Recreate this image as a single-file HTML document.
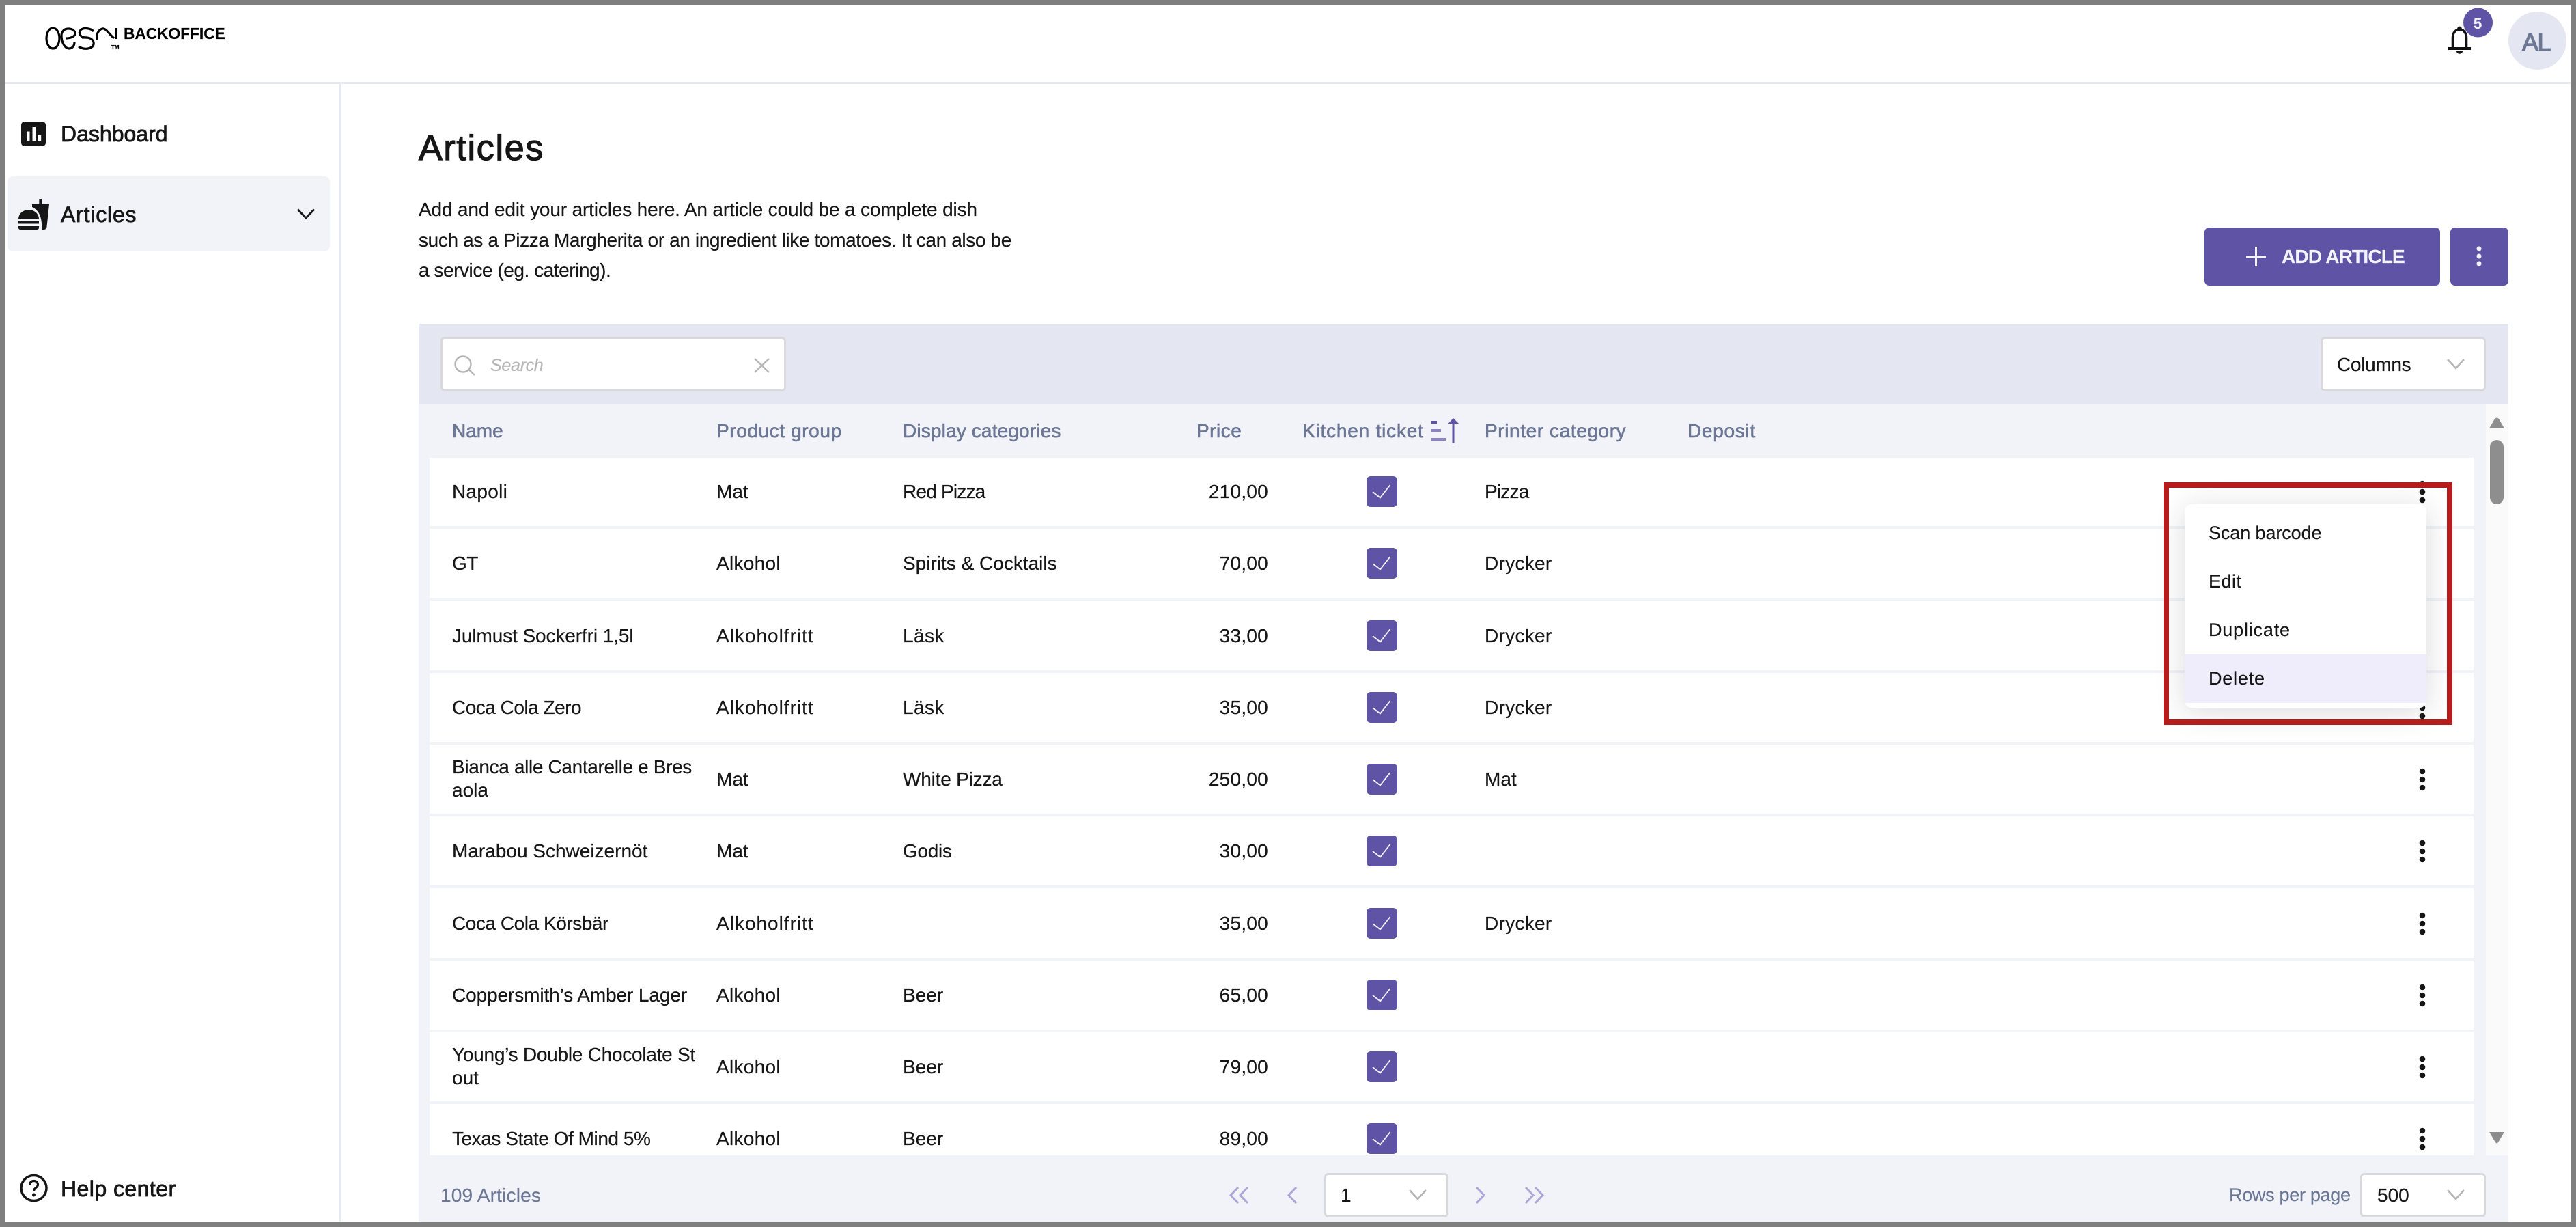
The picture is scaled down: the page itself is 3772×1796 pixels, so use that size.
<!DOCTYPE html>
<html><head><meta charset="utf-8"><title>Articles</title>
<style>
html,body{margin:0;padding:0;width:3772px;height:1796px;overflow:hidden;background:#fff}
body{position:relative;font-family:"Liberation Sans",sans-serif;color:#161616}
.a{position:absolute}
.t{position:absolute;white-space:nowrap;line-height:1;font-size:28px;-webkit-text-stroke:.2px currentColor}
.m{-webkit-text-stroke:.75px currentColor}
.h{color:#6c7795;top:617px;-webkit-text-stroke:.6px #6c7795}
.r{position:absolute;left:0;width:3772px;height:100px}
.n{left:662px;top:36px}.p{left:1049px;top:36px}.d{left:1322px;top:36px}
.pr{right:1915px;top:36px;letter-spacing:.25px}.c{left:2174px;top:36px}
.l1{left:662px;top:18px}.l2{left:662px;top:52px}
.af{letter-spacing:1px}
.ck{position:absolute;left:2001px;top:27px;width:45px;height:45px}
.kb{position:absolute;left:3538px;top:27px;width:18px;height:46px}
.menu{position:absolute;left:3199px;top:738px;width:354px;height:298px;background:#fff;border-radius:10px;box-shadow:0 6px 44px rgba(30,30,50,.16)}
.menu .t{font-size:27px;left:35px}
</style></head><body>

<!-- top bar -->
<div class="a" style="left:0;top:120px;width:3772px;height:3px;background:#e6e8f2"></div>
<div class="a" style="left:497px;top:122px;width:3px;height:1674px;background:#e6e8f2"></div>

<!-- logo -->
<svg class="a" style="left:0;top:0" width="360" height="120" fill="none" stroke="#000" stroke-width="3.2">
<ellipse cx="77.500" cy="56" rx="9.500" ry="15"/>
<path d="M90 52C90 46 94 42 100 42C106 42 110 45 110 49C110 53 104 56 97 56"/>
<path d="M90 52C90 62 95 71 101 71C106 71 109 67 109 62"/>
<path d="M137 46C133 41 122 40 118 44C114 49 118 55 126 55C134 55 138 60 137 65C136 71 124 74 115 68"/>
<path d="M120 55H128"/>
<path d="M142 58C140 48 147 41 152 42C156 43 160 50 167 56"/>
<path d="M170 41V57" stroke-width="3.800"/>
</svg>
<div class="t" style="left:181px;top:38px;font-size:22.7px;font-weight:700;color:#000">BACKOFFICE</div>
<div class="t" style="left:163px;top:66px;font-size:8px;font-weight:700;color:#000">TM</div>

<!-- bell/avatar -->
<svg class="a" style="left:3580px;top:8px" width="80" height="80" viewBox="3580 8 80 80">
<path d="M3591.500 70V55C3591.500 48 3596 43 3601.500 43C3607 43 3611.500 48 3611.500 55V70" fill="none" stroke="#111" stroke-width="3.600"/>
<circle cx="3601.500" cy="42" r="3.400" fill="#111"/>
<rect x="3585" y="69" width="33" height="4" fill="#111"/>
<path d="M3597 75H3606C3605.500 80 3597.500 80 3597 75Z" fill="#111"/>
<circle cx="3628.500" cy="33" r="21.500" fill="#5e53a5"/>
</svg>
<div class="t" style="left:3622px;top:24px;font-size:22px;font-weight:700;color:#f4f2fa">5</div>
<div class="a" style="left:3673px;top:17px;width:85px;height:85px;border-radius:50%;background:#e4e7f1"></div>
<div class="t" style="left:3693px;top:44px;font-size:36px;letter-spacing:-1.500px;color:#6c7795;-webkit-text-stroke:1.200px #6c7795">AL</div>

<!-- sidebar -->
<svg class="a" style="left:0;top:170px" width="70" height="60">
<rect x="31" y="8" width="36" height="36" rx="5" fill="#161616"/>
<rect x="39" y="22.500" width="4.500" height="13.500" fill="#fff"/>
<rect x="47.500" y="16" width="4.500" height="20" fill="#fff"/>
<rect x="55.700" y="28" width="4.500" height="8" fill="#fff"/>
</svg>
<div class="t m" style="left:89px;top:180px;font-size:32px">Dashboard</div>
<div class="a" style="left:11px;top:258px;width:472px;height:110px;background:#f2f3f8;border-radius:8px"></div>
<svg class="a" style="left:0;top:280px" width="80" height="60" viewBox="0 280 80 60" fill="#161616">
<rect x="57.300" y="291" width="4" height="10"/>
<path d="M47 299H72L68.500 332Q68 336 64 336H61C62 320 58 308 47 303Z"/>
<path d="M27 321C27 311 36 307 42 307C48 307 57 311 57 321Z"/>
<rect x="27" y="324" width="30" height="3.500"/>
<path d="M27 331H57V333Q57 336 54 336H30Q27 336 27 333Z"/>
</svg>
<div class="t m" style="left:89px;top:298px;font-size:32px;letter-spacing:.8px">Articles</div>
<svg class="a" style="left:430px;top:300px" width="36" height="26" fill="none" stroke="#161616" stroke-width="3"><path d="M6 6.500L18 19L30 6.500"/></svg>
<svg class="a" style="left:25px;top:1715px" width="50" height="50" viewBox="25 1715 50 50" fill="none" stroke="#161616">
<circle cx="49.500" cy="1739" r="18.500" stroke-width="3.500"/>
<path d="M43.500 1735C43.500 1730 46.500 1728.500 49.500 1728.500C53 1728.500 55.500 1731 55.500 1734C55.500 1738.500 49.500 1738.500 49.500 1743.500" stroke-width="3.200"/>
<circle cx="49.500" cy="1749" r="2.500" fill="#161616" stroke="none"/>
</svg>
<div class="t m" style="left:89px;top:1724px;font-size:32px;letter-spacing:.45px">Help center</div>

<!-- page head -->
<div class="t" style="left:613px;top:191px;font-size:52px;letter-spacing:1.700px;-webkit-text-stroke:1.300px #161616">Articles</div>
<div class="t" style="left:613px;top:293px;letter-spacing:-.15px">Add and edit your articles here. An article could be a complete dish</div>
<div class="t" style="left:613px;top:338px;letter-spacing:-.37px">such as a Pizza Margherita or an ingredient like tomatoes. It can also be</div>
<div class="t" style="left:613px;top:382px;letter-spacing:-.45px">a service (eg. catering).</div>

<!-- buttons -->
<div class="a" style="left:3228px;top:333px;width:345px;height:85px;border-radius:7px;background:#5e53a5"></div>
<svg class="a" style="left:3285px;top:357px" width="38" height="38" stroke="#f4f2fa" stroke-width="3"><path d="M4 19H33M18.500 4V33"/></svg>
<div class="t" style="left:3341px;top:362px;font-weight:700;letter-spacing:-.8px;color:#f4f2fa">ADD ARTICLE</div>
<div class="a" style="left:3588px;top:333px;width:85px;height:85px;border-radius:7px;background:#5e53a5"></div>
<svg class="a" style="left:3620px;top:355px" width="20" height="40" fill="#f4f2fa"><circle cx="10" cy="9" r="3.500"/><circle cx="10" cy="20" r="3.500"/><circle cx="10" cy="31" r="3.500"/></svg>

<!-- table shell -->
<div class="a" style="left:613px;top:474px;width:3060px;height:118px;background:#e4e7f1"></div>
<div class="a" style="left:613px;top:592px;width:3060px;height:1196px;background:#f2f3f8"></div>
<div class="a" style="left:3640px;top:592px;width:33px;height:1099px;background:#fafafa"></div>
<div class="a" style="left:629px;top:670px;width:2993px;height:1021px;background:#fff"></div>

<!-- search -->
<div class="a" style="left:645px;top:493px;width:500px;height:74px;background:#fff;border:3px solid #d9d9dd;border-radius:6px"></div>
<svg class="a" style="left:660px;top:515px" width="475" height="40" fill="none" stroke="#b5b5b5" stroke-width="2.400">
<circle cx="18" cy="18" r="11.500"/><path d="M26.500 26L35 34M445 10L466 30M466 10L445 30"/></svg>
<div class="t" style="left:718px;top:523px;font-size:25px;font-style:italic;letter-spacing:-.3px;color:#b5b5b5">Search</div>

<!-- columns -->
<div class="a" style="left:3398px;top:493px;width:236px;height:74px;background:#fff;border:3px solid #d9d9dd;border-radius:6px"></div>
<div class="t" style="left:3422px;top:520px;letter-spacing:-.3px">Columns</div>
<svg class="a" style="left:3580px;top:520px" width="32" height="24" fill="none" stroke="#b5b5b5" stroke-width="2.600"><path d="M4 6L16 19L28 6"/></svg>

<!-- header -->
<div class="t h" style="left:662px">Name</div>
<div class="t h" style="left:1049px;letter-spacing:.6px">Product group</div>
<div class="t h" style="left:1322px;letter-spacing:.15px">Display categories</div>
<div class="t h" style="left:1752px;letter-spacing:.5px">Price</div>
<div class="t h" style="left:1907px;letter-spacing:.8px">Kitchen ticket</div>
<div class="t h" style="left:2174px;letter-spacing:.6px">Printer category</div>
<div class="t h" style="left:2471px;letter-spacing:.7px">Deposit</div>
<svg class="a" style="left:2090px;top:606px" width="50" height="50" viewBox="2090 606 50 50" fill="#5e53a5">
<rect x="2096" y="616" width="8" height="4"/><rect x="2096" y="628" width="14" height="4" fill="#8b84c4"/><rect x="2096" y="641" width="21" height="4" fill="#8b84c4"/>
<rect x="2126.500" y="619" width="3" height="30"/><path d="M2120.500 620L2128 612L2136 620Z"/></svg>

<!-- row separators -->
<div class="a" style="left:629px;top:770px;width:2993px;height:4px;background:#f2f3f8"></div>
<div class="a" style="left:629px;top:875px;width:2993px;height:4px;background:#f2f3f8"></div>
<div class="a" style="left:629px;top:981px;width:2993px;height:4px;background:#f2f3f8"></div>
<div class="a" style="left:629px;top:1086px;width:2993px;height:4px;background:#f2f3f8"></div>
<div class="a" style="left:629px;top:1191px;width:2993px;height:4px;background:#f2f3f8"></div>
<div class="a" style="left:629px;top:1296px;width:2993px;height:4px;background:#f2f3f8"></div>
<div class="a" style="left:629px;top:1402px;width:2993px;height:4px;background:#f2f3f8"></div>
<div class="a" style="left:629px;top:1507px;width:2993px;height:4px;background:#f2f3f8"></div>
<div class="a" style="left:629px;top:1612px;width:2993px;height:4px;background:#f2f3f8"></div>

<svg width="0" height="0" style="position:absolute"><defs>
<symbol id="ck" viewBox="0 0 45 45"><rect width="45" height="45" rx="6" fill="#5e53a5"/><path d="M9 23L20 31.500L34.500 13" fill="none" stroke="#f4f2fa" stroke-width="1.800"/></symbol>
<symbol id="kb" viewBox="0 0 18 46"><circle cx="9" cy="11" r="4.300" fill="#161616"/><circle cx="9" cy="23" r="4.300" fill="#161616"/><circle cx="9" cy="35" r="4.300" fill="#161616"/></symbol>
</defs></svg>

<!-- rows -->
<div class="r" style="top:670px"><div class="t n" style="letter-spacing:.3px">Napoli</div><div class="t p">Mat</div><div class="t d" style="letter-spacing:-.8px">Red Pizza</div><div class="t pr">210,00</div><svg class="ck"><use href="#ck"/></svg><div class="t c" style="letter-spacing:-.8px">Pizza</div><svg class="kb"><use href="#kb"/></svg></div>
<div class="r" style="top:775px"><div class="t n" style="letter-spacing:-.5px">GT</div><div class="t p" style="letter-spacing:.3px">Alkohol</div><div class="t d">Spirits &amp; Cocktails</div><div class="t pr">70,00</div><svg class="ck"><use href="#ck"/></svg><div class="t c" style="letter-spacing:.3px">Drycker</div><svg class="kb"><use href="#kb"/></svg></div>
<div class="r" style="top:880.5px"><div class="t n" style="letter-spacing:-.1px">Julmust Sockerfri 1,5l</div><div class="t p af">Alkoholfritt</div><div class="t d" style="letter-spacing:.4px">Läsk</div><div class="t pr">33,00</div><svg class="ck"><use href="#ck"/></svg><div class="t c" style="letter-spacing:.3px">Drycker</div><svg class="kb"><use href="#kb"/></svg></div>
<div class="r" style="top:986px"><div class="t n" style="letter-spacing:-.5px">Coca Cola Zero</div><div class="t p af">Alkoholfritt</div><div class="t d" style="letter-spacing:.4px">Läsk</div><div class="t pr">35,00</div><svg class="ck"><use href="#ck"/></svg><div class="t c" style="letter-spacing:.3px">Drycker</div><svg class="kb"><use href="#kb"/></svg></div>
<div class="r" style="top:1091px"><div class="t l1" style="letter-spacing:-.35px">Bianca alle Cantarelle e Bres</div><div class="t l2">aola</div><div class="t p">Mat</div><div class="t d" style="letter-spacing:-.2px">White Pizza</div><div class="t pr">250,00</div><svg class="ck"><use href="#ck"/></svg><div class="t c">Mat</div><svg class="kb"><use href="#kb"/></svg></div>
<div class="r" style="top:1196px"><div class="t n">Marabou Schweizernöt</div><div class="t p">Mat</div><div class="t d" style="letter-spacing:-.3px">Godis</div><div class="t pr">30,00</div><svg class="ck"><use href="#ck"/></svg><svg class="kb"><use href="#kb"/></svg></div>
<div class="r" style="top:1301.500px"><div class="t n" style="letter-spacing:-.45px">Coca Cola Körsbär</div><div class="t p af">Alkoholfritt</div><div class="t pr">35,00</div><svg class="ck"><use href="#ck"/></svg><div class="t c" style="letter-spacing:.3px">Drycker</div><svg class="kb"><use href="#kb"/></svg></div>
<div class="r" style="top:1407px"><div class="t n" style="letter-spacing:-.1px">Coppersmith’s Amber Lager</div><div class="t p" style="letter-spacing:.3px">Alkohol</div><div class="t d">Beer</div><div class="t pr">65,00</div><svg class="ck"><use href="#ck"/></svg><svg class="kb"><use href="#kb"/></svg></div>
<div class="r" style="top:1512px"><div class="t l1" style="letter-spacing:-.25px">Young’s Double Chocolate St</div><div class="t l2">out</div><div class="t p" style="letter-spacing:.3px">Alkohol</div><div class="t d">Beer</div><div class="t pr">79,00</div><svg class="ck"><use href="#ck"/></svg><svg class="kb"><use href="#kb"/></svg></div>
<div class="r" style="top:1617px"><div class="t n" style="letter-spacing:-.45px">Texas State Of Mind 5%</div><div class="t p" style="letter-spacing:.3px">Alkohol</div><div class="t d">Beer</div><div class="t pr">89,00</div><svg class="ck"><use href="#ck"/></svg><svg class="kb"><use href="#kb"/></svg></div>

<!-- scrollbar -->
<svg class="a" style="left:3640px;top:600px" width="33" height="1080" viewBox="3640 600 33 1080" fill="#8e8e8e">
<path d="M3645 627L3653 613Q3656 610 3659 613L3667 627Z"/>
<rect x="3646" y="644" width="20" height="94" rx="10"/>
<path d="M3645 1657H3667L3658 1672Q3656 1675 3654 1672Z"/>
</svg>

<!-- footer -->
<div class="t" style="left:645px;top:1736px;letter-spacing:.2px;color:#6c7795">109 Articles</div>
<svg class="a" style="left:1795px;top:1730px" width="475" height="40" fill="none" stroke="#aaa7d6" stroke-width="3">
<path d="M18 8L7 19.500L18 31M32 8L21 19.500L32 31M103 8L92 19.500L103 31M367 8L378 19.500L367 31M439 8L450 19.500L439 31M453 8L464 19.500L453 31"/></svg>
<div class="a" style="left:1939px;top:1717px;width:176px;height:59px;background:#fff;border:3px solid #d9d9dd;border-radius:6px"></div>
<div class="t" style="left:1963px;top:1736px">1</div>
<svg class="a" style="left:2060px;top:1736px" width="32" height="24" fill="none" stroke="#b5b5b5" stroke-width="2.600"><path d="M4 6L16 19L28 6"/></svg>
<div class="t" style="left:3264px;top:1736px;font-size:27px;letter-spacing:-.3px;color:#6c7795">Rows per page</div>
<div class="a" style="left:3456px;top:1717px;width:178px;height:59px;background:#fff;border:3px solid #d9d9dd;border-radius:6px"></div>
<div class="t" style="left:3481px;top:1736px">500</div>
<svg class="a" style="left:3580px;top:1736px" width="32" height="24" fill="none" stroke="#b5b5b5" stroke-width="2.600"><path d="M4 6L16 19L28 6"/></svg>

<!-- menu -->
<div class="menu">
<div class="a" style="left:0;top:220px;width:354px;height:71px;background:#efedfb"></div>
<div class="t" style="top:29px;letter-spacing:-.1px">Scan barcode</div>
<div class="t" style="top:100px;letter-spacing:.5px">Edit</div>
<div class="t" style="top:171px;letter-spacing:.8px">Duplicate</div>
<div class="t" style="top:242px;letter-spacing:.8px">Delete</div>
</div>

<!-- red annotation -->
<div class="a" style="left:3168px;top:706px;width:407px;height:339px;border:8px solid #b71c1c"></div>

<!-- outer border -->
<div class="a" style="left:0;top:0;width:3756px;height:1780px;border:8px solid rgba(122,122,122,.96);pointer-events:none"></div>
</body></html>
